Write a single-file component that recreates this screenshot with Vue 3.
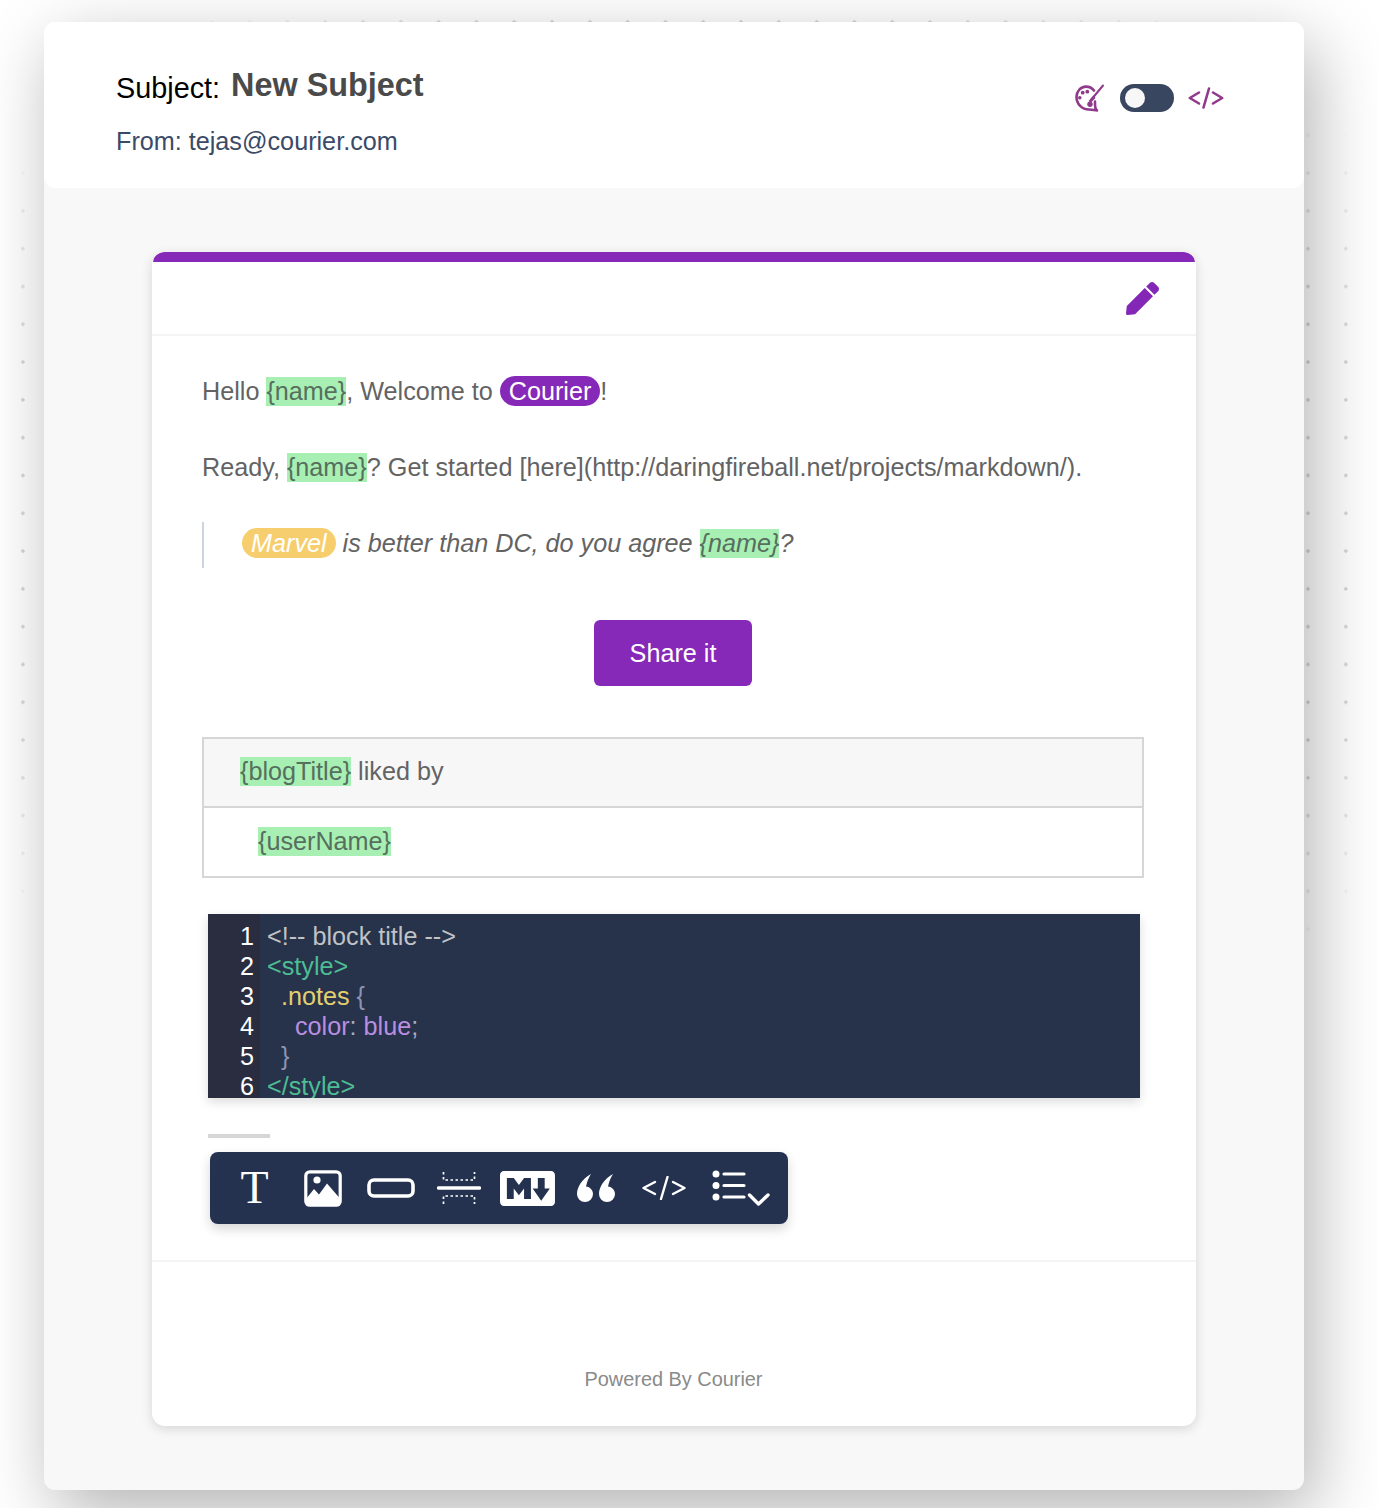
<script setup>
const codeLines = [
  [{ t: '<!-- block title -->', c: 'comment' }],
  [{ t: '<style>', c: 'tag' }],
  [{ t: '  ', c: '' }, { t: '.notes', c: 'sel' }, { t: ' {', c: 'punc' }],
  [{ t: '    ', c: '' }, { t: 'color', c: 'prop' }, { t: ': ', c: 'punc2' }, { t: 'blue', c: 'prop' }, { t: ';', c: 'punc2' }],
  [{ t: '  ', c: '' }, { t: '}', c: 'punc' }],
  [{ t: '</style>', c: 'tag' }]
]
</script>

<template>
  <div class="page">
    <div class="dots"></div>
    <div class="panel">
      <header class="head">
        <div class="head-left">
          <div class="subject-row">
            <span class="subject-label">Subject:</span>
            <span class="subject-value">New Subject</span>
          </div>
          <div class="from">From: tejas@courier.com</div>
        </div>
        <div class="head-right">
          <svg class="palette" width="30" height="28" viewBox="0 0 30 28" fill="none">
            <path d="M19 6.500C17 4 14 2.600 11 2.600 5.500 2.600 1.500 7.500 1.500 13c0 7 5.500 12.500 12.500 12.500 3 0 6 1 8 1-1.500-1.500-2-3.500-2-5.500v-3.500" stroke="#8f3a8a" stroke-width="2.600" stroke-linecap="round" stroke-linejoin="round"/>
            <path d="M16 16 28 1.500" stroke="#8f3a8a" stroke-width="2" stroke-linecap="round"/>
            <path d="M13.500 17 18.500 11.500 20.500 14 16 18.500z" fill="#8f3a8a"/>
            <circle cx="4.800" cy="13.700" r="1.800" fill="#8f3a8a"/>
            <circle cx="7.700" cy="8.700" r="1.900" fill="#8f3a8a"/>
            <circle cx="12.300" cy="7.700" r="1.900" fill="#8f3a8a"/>
            <circle cx="15" cy="20.300" r="2.700" fill="#8f3a8a"/>
          </svg>
          <div class="toggle"><span class="knob"></span></div>
          <svg class="code-link" width="36" height="22" viewBox="0 0 36 22" fill="none" stroke="#8f3a8a" stroke-width="2.600" stroke-linecap="round" stroke-linejoin="round">
            <path d="M11 5.500 1.800 11 11 16.500"/>
            <path d="M21 1.500 15.500 20.500"/>
            <path d="M25 5.500 34.200 11 25 16.500"/>
          </svg>
        </div>
      </header>

      <div class="stage">
        <article class="card">
          <div class="card-top"></div>
          <div class="card-tools">
            <svg width="33" height="33" viewBox="0 0 512 512" fill="#8427b7">
              <path d="M290.740 93.240l128.020 128.020-277.990 277.990-114.140 12.600C11.350 513.540-1.560 500.620.140 485.340l12.700-114.220 277.900-278.880zm207.200-19.060l-60.110-60.110c-18.750-18.750-49.160-18.750-67.910 0l-56.550 56.550 128.020 128.020 56.550-56.550c18.750-18.760 18.750-49.160 0-67.910z"/>
            </svg>
          </div>

          <div class="card-body">
            <p class="line">Hello <span class="var">{name}</span>, Welcome to <span class="pill purple">Courier</span>!</p>
            <p class="line gap">Ready, <span class="var">{name}</span>? Get started [here](http://daringfireball.net/projects/markdown/).</p>
            <blockquote class="quote">
              <span class="pill yellow">Marvel</span> is better than DC, do you agree <span class="var">{name}</span>?
            </blockquote>
            <div class="button-row"><a class="share">Share it</a></div>

            <div class="list-table">
              <div class="list-title"><span class="var">{blogTitle}</span> liked by</div>
              <div class="list-row"><span class="var">{userName}</span></div>
            </div>

            <div class="code">
              <div class="code-inner">
                <div v-for="(line, i) in codeLines" :key="i" class="code-line">
                  <span class="num">{{ i + 1 }}</span>
                  <span class="src"><span v-for="(tok, j) in line" :key="j" :class="tok.c">{{ tok.t }}</span></span>
                </div>
              </div>
            </div>

            <div class="rule"></div>

            <div class="toolbar">
              <span class="slot serif-t">T</span>
              <span class="slot">
                <svg width="38" height="37" viewBox="0 0 38 37">
                  <rect x="1.800" y="1.800" width="34.400" height="33.400" rx="4" fill="none" stroke="#fff" stroke-width="3.200"/>
                  <circle cx="13" cy="10" r="3.600" fill="#fff"/>
                  <path d="M2 29 10 19l5 5.500 8-11 13 15v7H2z" fill="#fff"/>
                </svg>
              </span>
              <span class="slot">
                <svg width="48" height="20" viewBox="0 0 48 20"><rect x="2" y="2" width="44" height="16" rx="5" fill="none" stroke="#fff" stroke-width="3.600"/></svg>
              </span>
              <span class="slot">
                <svg width="44" height="34" viewBox="0 0 44 34" fill="none" stroke="#fff">
                  <path d="M1.500 17h41" stroke-width="3.400" stroke-linecap="round"/>
                  <path d="M6.500 1v8h31V1" stroke-width="1.700" stroke-dasharray="2.500 2.500"/>
                  <path d="M6.500 33v-8h31v8" stroke-width="1.700" stroke-dasharray="2.500 2.500"/>
                </svg>
              </span>
              <span class="slot">
                <svg width="55" height="35" viewBox="0 3 16 10" preserveAspectRatio="none" fill="#fff">
                  <path d="M14.850 3H1.150C.520 3 0 3.520 0 4.150v7.690C0 12.480.520 13 1.150 13h13.690c.640 0 1.150-.520 1.150-1.150v-7.700C16 3.520 15.480 3 14.850 3zM9 11H7V8L5.500 9.920 4 8v3H2V5h2l1.500 2L7 5h2v6zm2.990.500L9.500 8H11V5h2v3h1.500l-2.510 3.500z"/>
                </svg>
              </span>
              <span class="slot">
                <svg width="38" height="28" viewBox="0 0 38 28" fill="#fff">
                  <path d="M14 0C5 5 0 13 0 20a8 8 0 1 0 16 0c0-4-3-7-7-7.500C10 8 11.500 4 14 0z"/>
                  <path d="M36 0C27 5 22 13 22 20a8 8 0 1 0 16 0c0-4-3-7-7-7.500C32 8 33.500 4 36 0z"/>
                </svg>
              </span>
              <span class="slot">
                <svg width="44" height="24" viewBox="0 0 44 24" fill="none" stroke="#fff" stroke-width="2.400" stroke-linecap="round" stroke-linejoin="round">
                  <path d="M13 6 1.500 12 13 18"/>
                  <path d="M25.500 1 19 23"/>
                  <path d="M31 6 42.500 12 31 18"/>
                </svg>
              </span>
              <span class="slot last">
                <svg width="58" height="36" viewBox="0 0 58 36" fill="none" stroke="#fff">
                  <circle cx="4" cy="4" r="3.500" fill="#fff" stroke="none"/>
                  <circle cx="4" cy="15.500" r="3.500" fill="#fff" stroke="none"/>
                  <circle cx="4" cy="27" r="3.500" fill="#fff" stroke="none"/>
                  <path d="M12 4h20M12 15.500h20M12 27h20" stroke-width="3.200" stroke-linecap="round"/>
                  <path d="M37.500 25 46.500 34 56 25" stroke-width="3.400" stroke-linecap="round" stroke-linejoin="round"/>
                </svg>
              </span>
            </div>
          </div>

          <footer class="card-foot">Powered By Courier</footer>
        </article>
      </div>
    </div>
  </div>
</template>

<style>
html, body { margin: 0; background: #fff; }
</style>

<style scoped>
.page {
  position: relative;
  width: 1378px;
  height: 1508px;
  overflow: hidden;
  background: #fff;
  font-family: "Liberation Sans", Arial, sans-serif;
  padding: 22px 0 0 44px;
  box-sizing: border-box;
}
.dots {
  position: absolute;
  left: 0;
  top: 0;
  width: 100%;
  height: 1000px;
  background-image: radial-gradient(circle, #d4d4d4 0 1.400px, transparent 2px);
  background-size: 37.800px 37.800px;
  background-position: 4px 3px;
  -webkit-mask-image: radial-gradient(846px 642px at 689px 530px, #000 82%, transparent 100%);
  mask-image: radial-gradient(846px 642px at 689px 530px, #000 82%, transparent 100%);
}
.panel {
  position: relative;
  width: 1260px;
  height: 1468px;
  background: #f8f8f8;
  border-radius: 11px;
  box-shadow: 10px 22px 70px rgba(0, 0, 0, 0.3);
}
.head {
  display: flex;
  justify-content: space-between;
  align-items: flex-start;
  height: 166px;
  box-sizing: border-box;
  padding: 41px 80px 0 72px;
  background: #fff;
  border-radius: 11px;
}
.subject-row {
  display: flex;
  align-items: baseline;
  gap: 11px;
  height: 50px;
}
.subject-label { font-size: 28.800px; line-height: 50px; color: #000; }
.subject-value { font-size: 32.400px; line-height: 46px; font-weight: 700; color: #4a4a4a; position: relative; top: -2px; }
.from { margin-top: 12px; font-size: 25.200px; line-height: 32px; color: #3a4a67; }
.head-right {
  display: flex;
  align-items: center;
  margin-top: 20px;
  height: 30px;
}
.palette { margin-right: 15px; }
.toggle {
  width: 54px;
  height: 28px;
  border-radius: 14px;
  background: #38475f;
  display: flex;
  align-items: center;
  padding-left: 5px;
  box-sizing: border-box;
  margin-right: 14px;
}
.knob { width: 20px; height: 20px; border-radius: 50%; background: #f7f7f7; }

.stage { padding: 64px 0 0 108px; }
.card {
  width: 1044px;
  height: 1174px;
  box-sizing: border-box;
  background: #fff;
  border-radius: 13px;
  box-shadow: 0 3px 12px rgba(0, 0, 0, 0.14);
  overflow: hidden;
  display: flex;
  flex-direction: column;
}
.card-top { height: 10px; margin: 0 1px; background: #8729b8; border-radius: 14px 14px 0 0; }
.card-tools {
  height: 74px;
  box-sizing: border-box;
  padding: 20px 37px 0 0;
  display: flex;
  justify-content: flex-end;
  align-items: flex-start;
  border-bottom: 2px solid #f4f4f4;
}
.card-body {
  flex: 1;
  padding: 39px 0 0 50px;
  font-size: 25.200px;
  line-height: 32px;
  color: #636363;
}
.line { margin: 0; }
.gap { margin-top: 44px; }
.var { background: #a8efb4; color: #566f5e; padding: 0 0 1px; }
.pill { display: inline-block; border-radius: 15px; line-height: 30px; height: 30px; color: #fff; }
.purple { background: #8729b8; padding: 0 9px; }
.yellow { background: #f7ce6e; padding: 0 9px; }
.quote {
  margin: 39px 0 0;
  border-left: 2px solid #cdd3e0;
  width: 900px;
  height: 46px;
  box-sizing: border-box;
  padding: 5px 0 0 38px;
  font-style: italic;
}
.button-row { width: 942px; margin-top: 52px; display: flex; justify-content: center; }
.share {
  width: 158px;
  height: 66px;
  border-radius: 6px;
  background: #8729b8;
  color: #fff;
  display: flex;
  align-items: center;
  justify-content: center;
}
.list-table {
  width: 942px;
  box-sizing: border-box;
  margin-top: 51px;
  border: 2px solid #d6d6d6;
}
.list-title {
  height: 69px;
  box-sizing: border-box;
  padding: 16px 0 0 36px;
  background: #f7f7f7;
  border-bottom: 2px solid #d6d6d6;
}
.list-row { height: 68px; box-sizing: border-box; padding: 17px 0 0 54px; }
.code {
  margin: 36px 0 0 6px;
  width: 932px;
  height: 184px;
  overflow: hidden;
  background: #27324b;
  box-shadow: 0 4px 10px rgba(0, 0, 0, 0.14);
}
.code-inner { padding-top: 7px; background: linear-gradient(to right, #2a2d40 52px, transparent 52px); height: 100%; box-sizing: border-box; }
.code-line { display: flex; height: 30px; line-height: 30px; }
.num { width: 46px; text-align: right; color: #fff; flex: none; }
.src { margin-left: 13px; white-space: pre; color: #c0c0c0; }
.comment { color: #c0c2c6; }
.tag { color: #4dbd94; }
.sel { color: #e2cf6f; }
.punc { color: #8b93b5; }
.punc2 { color: #a8adc8; }
.prop { color: #b98ee0; }
.rule { width: 62px; height: 4px; margin: 36px 0 0 6px; background: #d6d6d6; }
.toolbar {
  display: flex;
  align-items: center;
  width: 578px;
  height: 72px;
  box-sizing: border-box;
  margin: 14px 0 0 8px;
  padding: 0 0 0 10.500px;
  background: #24324f;
  border-radius: 8px;
  box-shadow: 0 5px 12px rgba(0, 0, 0, 0.16);
}
.slot { width: 68.200px; flex: none; display: flex; justify-content: center; align-items: center; }
.slot.last { width: 87px; }
.serif-t { font-family: "Liberation Serif", serif; font-size: 46px; line-height: 46px; color: #fff; }
.card-foot {
  height: 166px;
  box-sizing: border-box;
  border-top: 2px solid #f4f4f4;
  padding-top: 104px;
  padding-right: 1px;
  text-align: center;
  font-size: 19.900px;
  line-height: 26px;
  color: #8a8a8a;
}
</style>
